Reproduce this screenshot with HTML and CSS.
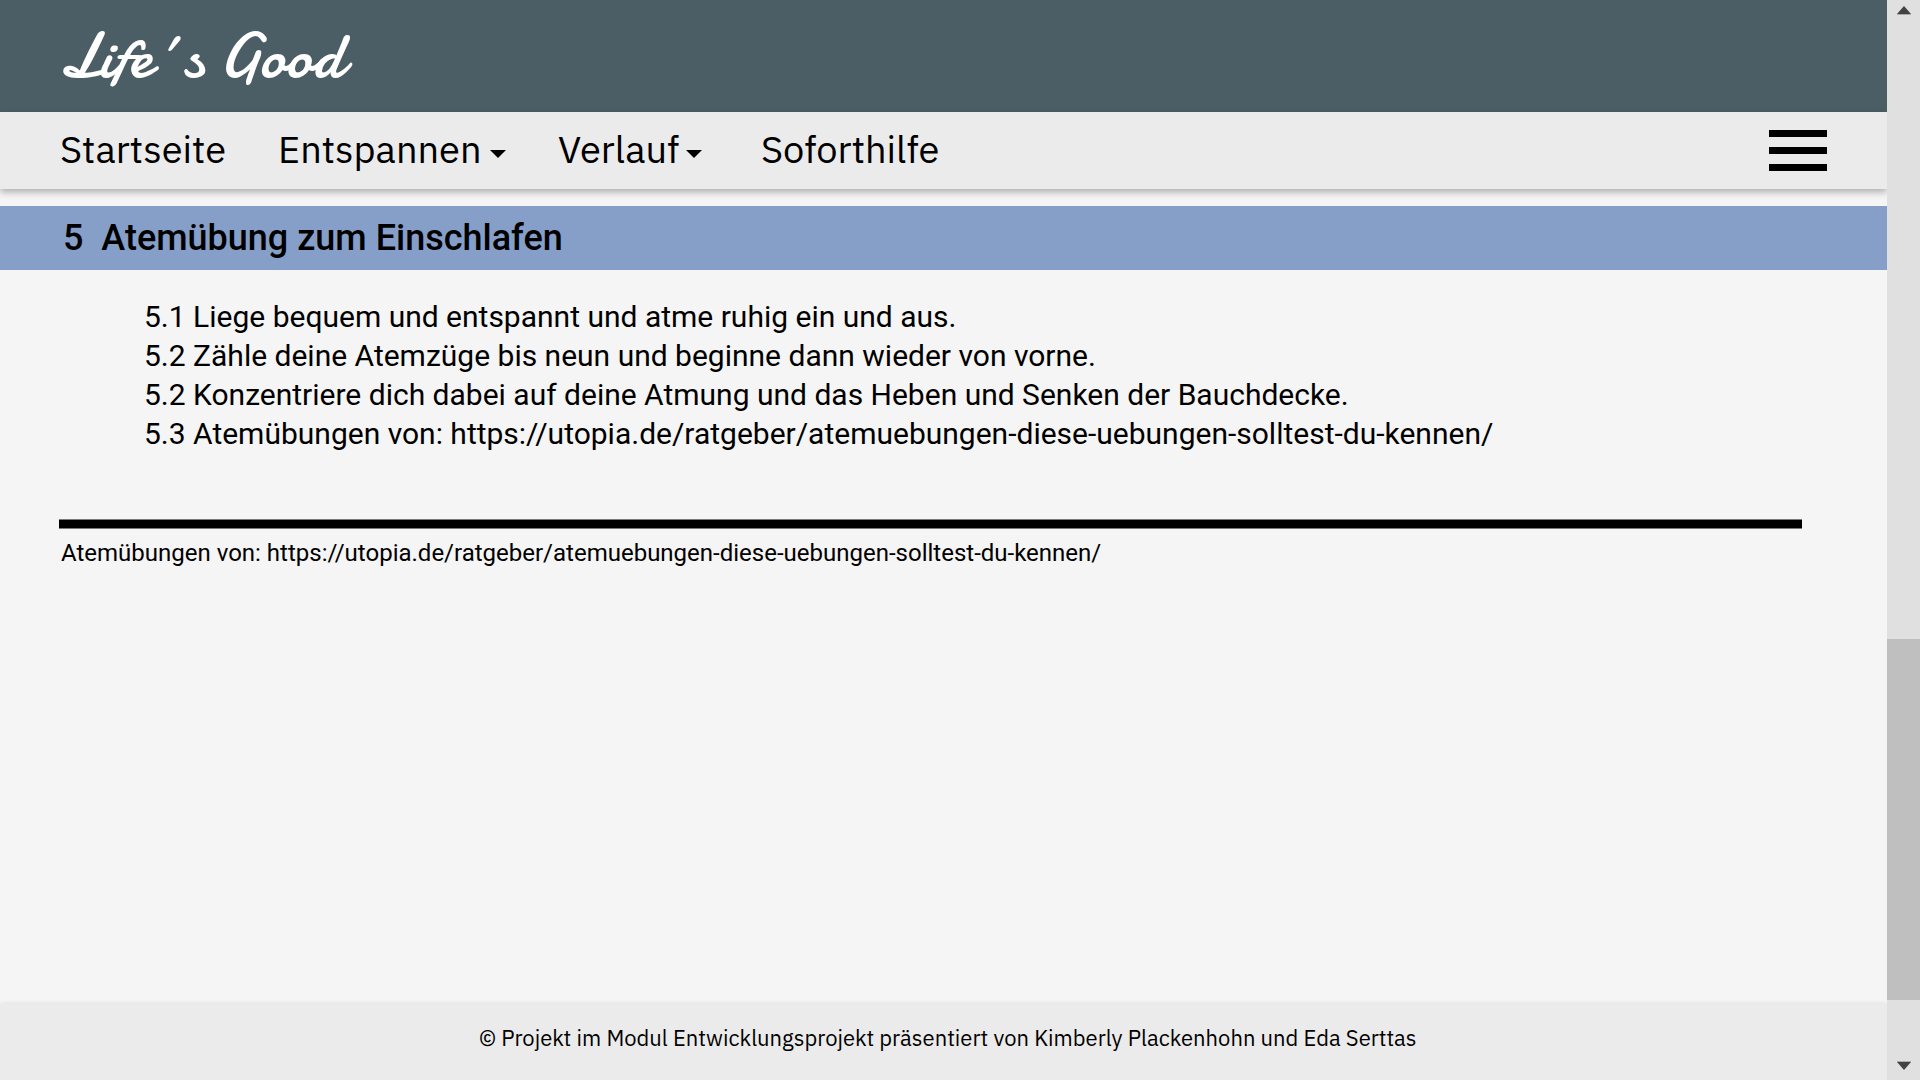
FILE: index.html
```
<!DOCTYPE html>
<html lang="de">
<head>
<meta charset="utf-8">
<title>Life´s Good</title>
<link rel="stylesheet" href="styles.css">
</head>
<body>
<div class="window">
  <div class="page">
    <header class="header">
      <div class="logo">Life´s Good</div>
    </header>
    <nav class="nav">
      <ul class="menu">
        <li class="item start">Startseite</li>
        <li class="item relax">Entspannen</li>
        <li class="item history">Verlauf</li>
        <li class="item help">Soforthilfe</li>
      </ul>
      <div class="burger"><span></span><span></span><span></span></div>
    </nav>
    <main class="content">
      <h1 class="title">5  Atemübung zum Einschlafen</h1>
      <ul class="steps">
        <li>5.1 Liege bequem und entspannt und atme ruhig ein und aus.</li>
        <li>5.2 Zähle deine Atemzüge bis neun und beginne dann wieder von vorne.</li>
        <li>5.2 Konzentriere dich dabei auf deine Atmung und das Heben und Senken der Bauchdecke.</li>
        <li>5.3 Atemübungen von: https://utopia.de/ratgeber/atemuebungen-diese-uebungen-solltest-du-kennen/</li>
      </ul>
      <div class="rule"></div>
      <p class="source">Atemübungen von: https://utopia.de/ratgeber/atemuebungen-diese-uebungen-solltest-du-kennen/</p>
    </main>
    <footer class="footer">© Projekt im Modul Entwicklungsprojekt präsentiert von Kimberly Plackenhohn und Eda Serttas</footer>
  </div>
  <div class="scrollbar">
    <svg class="arrow" width="14" height="9" viewBox="0 0 14 9"><path d="M7 0L14 8H0Z" fill="#424242"/><path d="M0 8.5H14" stroke="#aaa"/></svg>
    <div class="thumb"></div>
    <svg class="arrow" width="14" height="9" viewBox="0 0 14 9"><path d="M7 9L14 1H0Z" fill="#424242"/><path d="M0 .5H14" stroke="#aaa"/></svg>
  </div>
</div>
</body>
</html>
```
FILE: styles.css
```
* { box-sizing: border-box; }
body { margin: 0; overflow: hidden; background: #f5f5f5; color: #000; font-family: Roboto, sans-serif; }
ul, h1, p { margin: 0; padding: 0; list-style: none; }
.window { display: flex; width: 1920px; height: 1080px; }
.page { display: flex; flex-direction: column; width: 1887px; height: 1080px; overflow: hidden; }

.header { flex: none; height: 112px; padding-left: 59px; background: #4c5e65; }
.logo { color: #fff; font: 64px/112px Damion, Lato, cursive; white-space: nowrap; }

.nav { position: relative; display: flex; flex: none; justify-content: space-between; align-items: center; height: 77px; padding: 0 60px; background: #ebebeb; box-shadow: 0 3px 7px rgba(0, 0, 0, .3); }
.menu { display: flex; height: 77px; }
.item { display: flex; align-items: center; height: 73px; font: 38px/73px "IBM Plex Sans", Roboto, sans-serif; }
.start { width: 218px; }
.relax { width: 280px; }
.history { width: 203px; }
.relax::after, .history::after { content: ""; margin-top: 10px; border: 8px solid transparent; border-top: 8px solid #000; border-bottom: 0; }
.relax::after { margin-left: 8px; }
.history::after { margin-left: 7px; }
.burger { display: flex; flex-direction: column; gap: 10px; width: 58px; }
.burger span { height: 7px; background: #000; }

.content { flex: 1; padding-top: 17px; }
.title { height: 64px; padding-left: 63px; background: #869fc9; font-size: 36px; font-weight: 500; line-height: 65px; white-space: pre; }
.steps { padding: 27px 0 0 144px; font-size: 30px; line-height: 39px; }
.rule { width: 1743px; height: 10px; margin: 66px 0 0 59px; background: #000; border: solid #7a7a7a; border-width: 1px 0; }
.source { padding: 10px 0 0 61px; font-size: 24px; line-height: 28px; }

.footer { position: relative; flex: none; height: 76px; padding-left: 479px; background: #ebebeb; box-shadow: 0 3px 7px rgba(0, 0, 0, .3); font: 22px/68px "IBM Plex Sans", Roboto, sans-serif; }

.scrollbar { display: flex; flex-direction: column; align-items: center; justify-content: space-between; width: 33px; height: 1080px; padding: 6px 0 10px; background: #e0e0e0; }
.thumb { width: 33px; height: 361px; margin-top: 563px; background: #bfbfbf; }
.arrow { display: block; }
```
